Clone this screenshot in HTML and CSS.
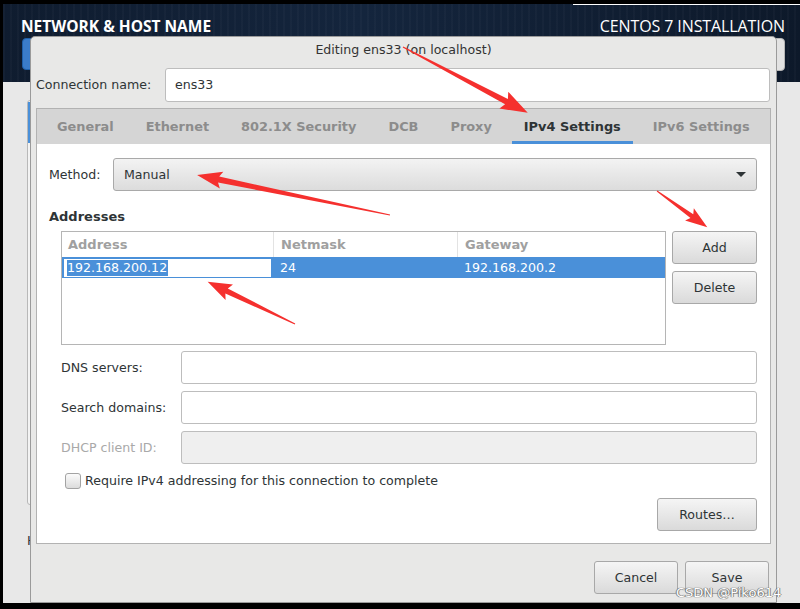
FILE: index.html
```html
<!doctype html>
<html lang="en">
<head>
  <meta charset="utf-8" />
  <meta name="viewport" content="width=device-width, initial-scale=1" />
  <title>Network &amp; Host Name</title>
  <link rel="stylesheet" href="styles.css">
</head>
<body>
  <div class="screen">
    <header class="spoke-head">
      <div class="progress"></div>
      <div class="head-row">
        <h1>NETWORK &amp; HOST NAME</h1>
        <div class="product">CENTOS 7 INSTALLATION</div>
      </div>
      <div class="head-row tools">
        <div class="done" aria-label="Done"></div>
        <div class="kbd">us</div>
      </div>
    </header>

    <div class="spoke-body">
      <div class="devices"><div class="dev sel"></div></div>
      <div class="hostname">Host name:</div>
    </div>

    <section class="dialog" role="dialog" aria-labelledby="dlg-title">
      <div class="dialog-title" id="dlg-title">Editing ens33 (on localhost)</div>

      <div class="conn-row">
        <label>Connection name:</label>
        <div class="entry">ens33</div>
      </div>

      <div class="notebook">
        <nav class="tabs">
          <span class="tab">General</span>
          <span class="tab">Ethernet</span>
          <span class="tab">802.1X Security</span>
          <span class="tab">DCB</span>
          <span class="tab">Proxy</span>
          <span class="tab on">IPv4 Settings</span>
          <span class="tab">IPv6 Settings</span>
        </nav>

        <div class="panel">
          <div class="method">
            <label>Method:</label>
            <div class="combo"><span>Manual</span><i class="caret"></i></div>
          </div>

          <h2>Addresses</h2>
          <div class="addr">
            <div class="table">
              <div class="tr th">
                <div class="td">Address</div>
                <div class="td">Netmask</div>
                <div class="td">Gateway</div>
              </div>
              <div class="tr sel">
                <div class="td"><div class="cell-edit"><span class="hl">192.168.200.12</span></div></div>
                <div class="td">24</div>
                <div class="td">192.168.200.2</div>
              </div>
            </div>
            <div class="side">
              <button class="btn">Add</button>
              <button class="btn">Delete</button>
            </div>
          </div>

          <div class="rows">
            <div class="row"><label>DNS servers:</label><div class="entry"></div></div>
            <div class="row"><label>Search domains:</label><div class="entry"></div></div>
            <div class="row off"><label>DHCP client ID:</label><div class="entry"></div></div>
          </div>

          <div class="check"><span class="box"></span>Require IPv4 addressing for this connection to complete</div>

          <div class="routes"><button class="btn">Routes…</button></div>
        </div>
      </div>

      <div class="actions">
        <button class="btn">Cancel</button>
        <button class="btn">Save</button>
      </div>
    </section>
  </div>

  <!-- red annotation arrows -->
  <svg class="marks" width="800" height="609" viewBox="0 0 800 609">
    <g fill="#f5302e">
      <path transform="translate(403 47) rotate(27.8)" d="M0 -0.6 L117 -3 L114 -9.5 L141 0 L114 9.5 L117 3 L0 0.6 Z"/>
      <path transform="translate(390 215) rotate(191.7)" d="M0 -0.6 L175 -3 L172 -8.5 L197 0 L172 8.5 L175 3 L0 0.6 Z"/>
      <path transform="translate(657 191) rotate(35.8)" d="M0 -0.5 L43 -2.4 L40 -7.5 L62 0 L40 7.5 L43 2.4 L0 0.5 Z"/>
      <path transform="translate(295 324) rotate(205.8)" d="M0 -0.6 L76 -2.8 L73 -8.5 L97 0 L73 8.5 L76 2.8 L0 0.6 Z"/>
    </g>
  </svg>
  <div class="wm">CSDN @Piko614</div>
</body>
</html>
```

FILE: styles.css
```css
*{box-sizing:border-box}
html,body{height:100%}
body{
  margin:0; position:relative; background:#000; overflow:hidden;
  font:12.6px/16px "DejaVu Sans", sans-serif; color:#2e3436;
}

.screen{
  position:relative; margin:4px 0 0 3px; width:797px; height:599px;
  display:flex; flex-direction:column; background:#e8e8e8;
}

/* installer header */
.spoke-head{
  height:78px; padding:0 15px 0 18px;
  background:
    repeating-linear-gradient(90deg, rgba(255,255,255,.025) 0 2px, transparent 2px 7px),
    linear-gradient(90deg, #0f1c2f, #14253d 45%, #0d192a);
  color:#fff;
}
.progress{height:1px; width:227px; margin-left:auto; margin-right:-15px; background:#fff}
.head-row{display:flex; justify-content:space-between; align-items:center}
h1{margin:11px 0 0; font:700 15.5px/20px "Open Sans", sans-serif; letter-spacing:0}
.product{margin-top:11px; font:400 16px/20px "Open Sans", sans-serif; letter-spacing:-.1px}
.tools{margin-top:2px; height:32px}
.done{margin-left:1px; width:64px; height:32px; border-radius:4px; background:#3b7cc9; border:1px solid #1f5fa8}
.kbd{width:80px; height:33px; border-radius:4px; background:#e2e2e2; border:1px solid #b5b5b5; color:#333; text-align:center; line-height:31px}

.spoke-body{flex:1; padding:18px 0 0 24px}
.devices{width:300px; height:405px; border:1px solid #b8b8b8; border-radius:3px; background:#f3f3f3; padding-top:1px}
.dev.sel{height:41px; background:#4a90d9}
.hostname{margin-top:28px; color:#2e3436}

/* dialog window */
.dialog{
  position:absolute; left:27px; top:32px; width:747px; height:567px; z-index:2;
  display:flex; flex-direction:column;
  background:#e8e8e7; border:1px solid #9a9a9a; border-radius:5px 5px 0 0;
}
.dialog-title{text-align:center; padding:5px 0 10px; color:#333}

.conn-row{display:flex; align-items:center; padding:0 6px 0 5px; height:34px}
.conn-row label{flex:0 0 129px}
.entry{
  flex:1; height:34px; display:flex; align-items:center; padding:0 9px;
  background:#fff; border:1px solid #bdbdbd; border-radius:3px;
}

.notebook{flex:1; margin:6px 5px 0; border:1px solid #b2b2b2; display:flex; flex-direction:column}
.tabs{display:flex; height:35px; background:#d5d5d5; padding-left:4px}
.tab{margin:0 4px; padding:0 12px; display:flex; align-items:center; font-weight:700; font-size:12.9px; color:#8c8c8c}
.tab.on{color:#2e3436; box-shadow:inset 0 -3px #4a90d9}

.panel{flex:1; background:#fff; padding:14px 13px 0 12px}

.method{display:flex; align-items:center}
.method label{flex:0 0 64px}
.combo{
  flex:1; height:33px; display:flex; align-items:center; justify-content:space-between; padding:0 10px;
  border:1px solid #a9a9a9; border-radius:3px; background:linear-gradient(#f3f3f3, #dcdcdc);
}
.caret{width:0; height:0; border-left:5px solid transparent; border-right:5px solid transparent; border-top:5px solid #2e3436}

h2{margin:18px 0 0; font-size:13px; line-height:16px; font-weight:700}

.addr{display:flex; gap:6px; margin:6px 0 0 12px}
.table{flex:1; height:114px; border:1px solid #b5b5b5; background:#fff}
.tr{display:grid; grid-template-columns:212px 184px 1fr}
.th{height:25px; color:#a0a0a0; font-weight:700; font-size:13px}
.th .td{display:flex; align-items:center; padding:0 7px}
.th .td:first-child{padding-left:6px}
.th .td:not(:last-child){border-right:1px solid #e3e3e3}
.tr.sel{height:21px; background:#4a90d9; color:#fff}
.tr.sel .td{display:flex; align-items:center; padding:0 6px}
.tr.sel .td:first-child{padding:2px 3px 1px 2px}
.cell-edit{flex:1; height:18px; background:#fff; padding:1px 2px 1px 3px; display:flex}
.hl{background:#4a90d9; color:#fff; line-height:16px; padding-right:1px}

.side{flex:0 0 85px; display:flex; flex-direction:column; gap:7px}
.btn{
  height:33px; font:inherit; color:#2e3436; padding:0;
  border:1px solid #a8a8a8; border-radius:3px; background:linear-gradient(#f5f5f5, #dadada);
}

.rows{margin:6px 0 0 12px; display:flex; flex-direction:column; gap:7px}
.row{display:flex; align-items:center}
.row label{flex:0 0 120px}
.row .entry{height:33px}
.row.off label{color:#a9a9a9}
.row.off .entry{background:#efefef}

.check{display:flex; align-items:center; gap:4px; margin:9px 0 0 16px; height:16px}
.box{width:16px; height:16px; border:1px solid #a3a3a3; border-radius:3px; background:linear-gradient(#fbfbfb, #dcdcdc)}

.routes{display:flex; justify-content:flex-end; margin-top:9px}
.routes .btn{width:100px}

.actions{display:flex; justify-content:flex-end; gap:7px; padding:17px 7px 8px}
.actions .btn{width:84px}

/* annotations on top of the screenshot */
.marks{position:absolute; left:0; top:0; z-index:5; pointer-events:none}
.wm{
  position:absolute; left:676px; top:585px; z-index:6; font-size:13px;
  color:#fff;
  text-shadow:0 0 1px #666, 0 0 1px #666, 1px 0 0 rgba(110,110,110,.6), -1px 0 0 rgba(110,110,110,.6);
}
```
